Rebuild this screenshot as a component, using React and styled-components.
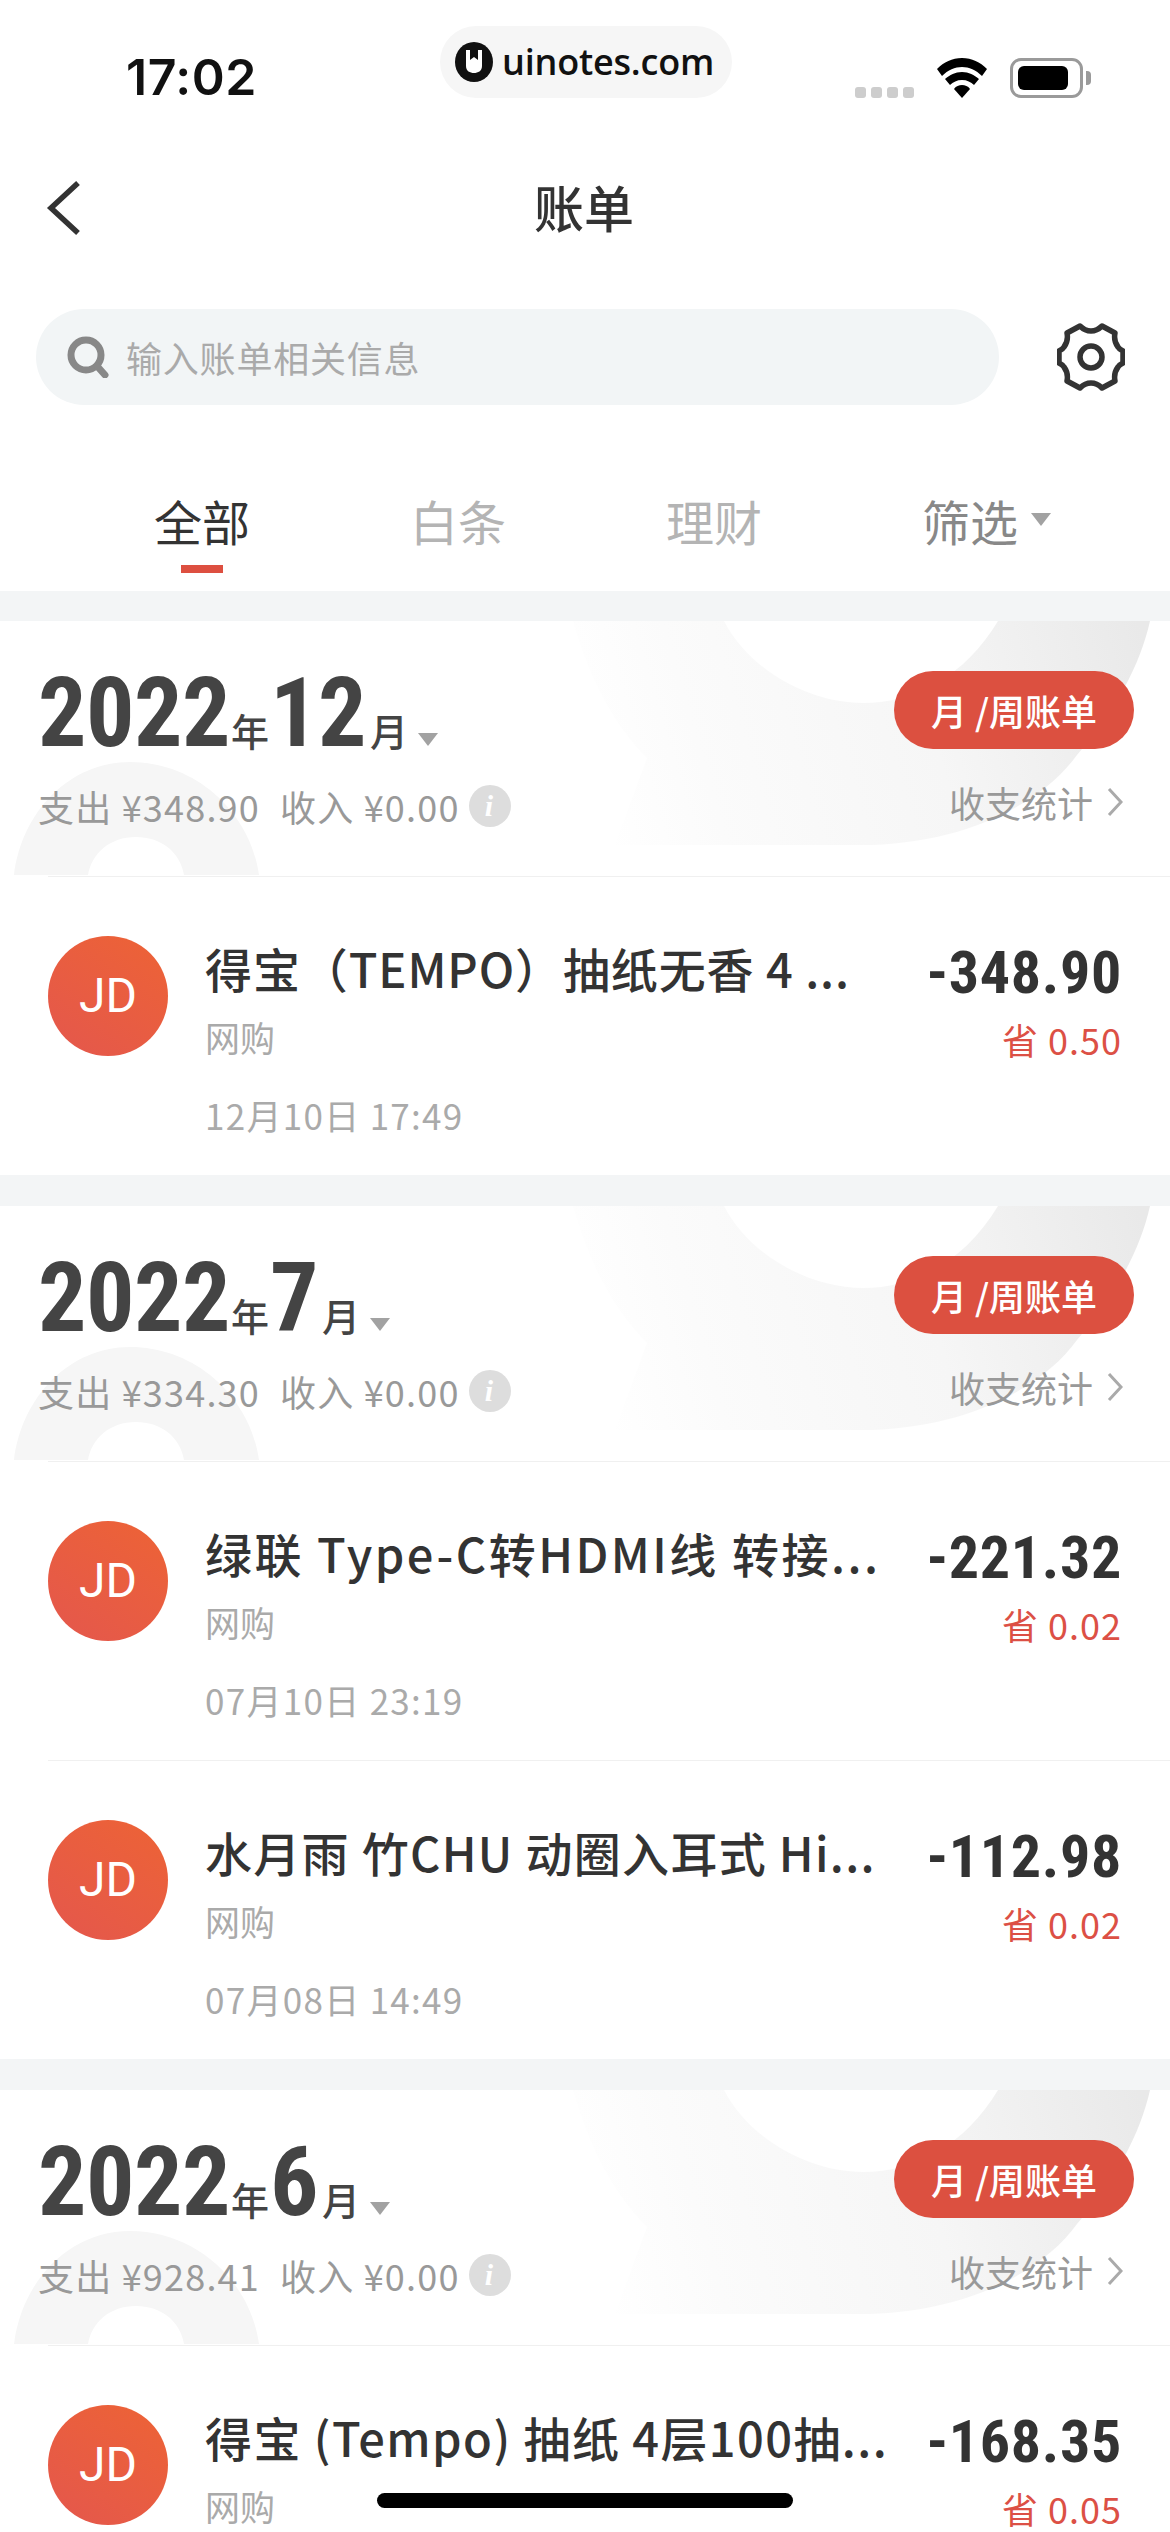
import React from "react";
import styled, { createGlobalStyle } from "styled-components";

const CJK = `"Noto Sans CJK SC", "Noto Sans", sans-serif`;
const NUM = `Roboto, "Liberation Sans", sans-serif`;

const Global = createGlobalStyle`
  html, body { margin: 0; padding: 0; background: #fff; }
  * { box-sizing: border-box; }
`;

const Phone = styled.div`
  position: relative;
  width: 1170px;
  height: 2532px;
  overflow: hidden;
  background: #fff;
  font-family: ${CJK};
`;

const StatusBar = styled.div`
  display: flex;
  align-items: flex-end;
  height: 100px;
  padding: 26px 87px 2px 126px;
`;
const Time = styled.div`
  width: 130px;
  font: 600 50px/46px Inter, ${NUM};
  letter-spacing: 0.5px;
  color: #111;
  margin-bottom: -2px;
`;
const Pill = styled.div`
  display: flex;
  align-items: center;
  gap: 9px;
  width: 292px;
  height: 72px;
  margin-left: 184px;
  padding: 0 0 0 15px;
  border-radius: 36px;
  background: #f6f6f6;
`;
const PillText = styled.span`
  font: 600 36px/1 "Open Sans", ${NUM};
  color: #111;
  letter-spacing: -.2px;
`;
const StatusIcons = styled.div`
  display: flex;
  align-items: flex-end;
  margin-left: auto;
  gap: 23px;
`;
const Dots = styled.div`
  display: flex;
  gap: 5px;
`;
const Dot = styled.i`
  display: block;
  width: 11px;
  height: 11px;
  border-radius: 3px;
  background: #cdcdcd;
`;
const Battery = styled.div`
  position: relative;
  width: 73px;
  height: 40px;
  padding: 5px;
  border: 3px solid #9a9a9a;
  border-radius: 11px;
  &::after {
    content: "";
    position: absolute;
    right: -11px;
    top: 10px;
    width: 5px;
    height: 14px;
    border-radius: 0 4px 4px 0;
    background: #9a9a9a;
  }
`;
const BatteryFill = styled.div`
  width: 50px;
  height: 100%;
  border-radius: 6px;
  background: #000;
`;

const Nav = styled.div`
  display: grid;
  grid-template-columns: 1fr auto 1fr;
  align-items: center;
  height: 116px;
  margin-top: 50px;
  padding: 0 46px;
`;
const Title = styled.div`
  font-size: 50px;
  font-weight: 500;
  line-height: 60px;
  color: #333;
  margin: -4px 0 0 -2px;
`;

const SearchRow = styled.div`
  display: flex;
  align-items: center;
  margin-top: 43px;
  padding: 0 45px 0 36px;
  justify-content: space-between;
`;
const SearchBox = styled.div`
  display: flex;
  align-items: center;
  gap: 17px;
  width: 963px;
  height: 96px;
  padding-left: 31px;
  border-radius: 48px;
  background: #f2f5f6;
`;
const Placeholder = styled.span`
  font-size: 36px;
  line-height: 50px;
  letter-spacing: .8px;
  color: #aaa;
`;

const Tabs = styled.div`
  display: grid;
  grid-template-columns: repeat(4, 256px);
  padding: 85px 0 18px 74px;
`;
const Tab = styled.div`
  position: relative;
  display: flex;
  flex-direction: column;
  align-items: center;
  font-size: 48px;
  line-height: 60px;
  color: ${(p) => p.$color};
`;
const TabLabel = styled.span`
  position: relative;
`;
const TabBar = styled.i`
  display: block;
  width: 42px;
  height: 8px;
  margin-top: 15px;
  background: ${(p) => (p.$on ? "#dd4f40" : "transparent")};
`;
const Caret = styled.i`
  display: inline-block;
  width: 0;
  height: 0;
  border-left: 10px solid transparent;
  border-right: 10px solid transparent;
  border-top: 13px solid #a2a2a2;
`;
const TabCaret = styled(Caret)`
  position: absolute;
  left: 189px;
  top: 23px;
`;

const Section = styled.section`
  border-top: ${(p) => p.$band}px solid #f3f5f6;
`;
const MonthHeader = styled.div`
  position: relative;
  display: flex;
  justify-content: space-between;
  height: 255px;
  padding: 53px 36px 0 38px;
`;
const Decor = styled.svg`
  position: absolute;
  left: 0;
  top: 0;
`;
const HeaderLeft = styled.div`
  position: relative;
`;
const HeaderRight = styled.div`
  position: relative;
  display: flex;
  flex-direction: column;
  align-items: flex-end;
  margin-top: -3px;
`;
const DateRow = styled.div`
  display: flex;
  align-items: baseline;
  height: 78px;
  color: #444;
  white-space: nowrap;
`;
const Big = styled.span`
  font: 700 96px/78px ${NUM};
  font-stretch: 75%;
  display: inline-block;
  letter-spacing: -.5px;
`;
const Unit = styled.span`
  font-size: 38px;
  font-weight: 500;
  line-height: 78px;
  margin-left: ${(p) => p.$ml || 0}px;
  margin-right: ${(p) => p.$mr || 0}px;
`;
const DateCaret = styled(Caret)`
  margin-left: 10px;
`;
const Stats = styled.div`
  display: flex;
  align-items: center;
  gap: 20px;
  margin-top: 29px;
  font-size: 36px;
  line-height: 50px;
  letter-spacing: 1.2px;
  color: #999;
  white-space: nowrap;
`;
const Info = styled.span`
  display: flex;
  align-items: center;
  justify-content: center;
  width: 42px;
  height: 42px;
  margin-left: -11px;
  border-radius: 50%;
  background: #ddd;
  color: #fff;
  font: italic 700 30px/1 "Liberation Serif", serif;
`;
const BillButton = styled.div`
  display: flex;
  align-items: center;
  justify-content: center;
  width: 240px;
  height: 78px;
  border-radius: 39px;
  background: #dc5040;
  color: #fff;
  font-size: 36px;
  font-weight: 500;
  white-space: pre;
`;
const StatLink = styled.div`
  display: flex;
  align-items: center;
  gap: 14px;
  margin: 28px 11px 0 0;
  font-size: 36px;
  line-height: 50px;
  color: #999;
`;

const Item = styled.div`
  display: flex;
  height: 299px;
  padding: 60px 48px 0 48px;
  position: relative;
  &::before {
    content: "";
    position: absolute;
    left: 48px;
    right: 0;
    top: 0;
    height: 1px;
    background: #f0f0f0;
  }
`;
const Avatar = styled.div`
  flex: none;
  display: flex;
  align-items: center;
  justify-content: center;
  width: 120px;
  height: 120px;
  border-radius: 50%;
  background: linear-gradient(215deg, #ed6335, #e4574d);
  color: #fff;
  font: 400 48px/1 Roboto, sans-serif;
`;
const Body = styled.div`
  flex: 1;
  min-width: 0;
  margin: 0 0 0 37px;
`;
const ItemTitle = styled.div`
  font-size: 47px;
  font-weight: 500;
  line-height: 64px;
  letter-spacing: ${(p) => p.$ls}px;
  color: #333;
  white-space: nowrap;
`;
const Sub = styled.div`
  margin-top: 12px;
  font-size: 35px;
  line-height: 50px;
  color: #aaa;
`;
const When = styled.div`
  margin-top: 28px;
  font-size: 35px;
  line-height: 50px;
  letter-spacing: 1.3px;
  color: #aaa;
`;
const Money = styled.div`
  flex: none;
  display: flex;
  flex-direction: column;
  align-items: flex-end;
  margin: 3px 0 0 0;
`;
const Amount = styled.div`
  font: 700 60px/68px ${NUM};
  font-stretch: 75%;
  letter-spacing: .7px;
  color: #333;
`;
const Save = styled.div`
  margin-top: 7px;
  font-size: 36px;
  line-height: 50px;
  letter-spacing: 1px;
  color: #dc5045;
`;
const HomeBar = styled.div`
  position: absolute;
  left: 377px;
  bottom: 24px;
  width: 416px;
  height: 15px;
  border-radius: 8px;
  background: #000;
`;

const DecorArt = ({ id }) => (
  <Decor width="1170" height="254" viewBox="0 0 1170 254">
    <defs>
      <linearGradient id={id} x1="600" x2="1150" y1="200" y2="40" gradientUnits="userSpaceOnUse">
        <stop offset="0" stopColor="#ffffff" />
        <stop offset="0.2" stopColor="#fbfbfb" />
        <stop offset="0.6" stopColor="#f6f6f6" />
        <stop offset="1" stopColor="#e9e9e9" />
      </linearGradient>
    </defs>
    <path
      fill={`url(#${id})`}
      d="M573 0C590 60 615 105 647 137L615 224H860C960 224 1040 185 1077 134C1115 90 1140 45 1150 0H998C965 55 915 82 863 82C810 82 750 50 724 0Z"
    />
    <path
      fill="#f6f6f6"
      d="M14 254C22 190 70 141 130 141C195 141 250 190 259 254H184C180 230 160 216 136 216C110 216 92 232 88 254Z"
    />
  </Decor>
);

const BackIcon = () => (
  <svg width="36" height="56" viewBox="0 0 36 56" fill="none" stroke="#333" strokeWidth="5.5">
    <path d="M32 3L5 28L32 53" />
  </svg>
);
const SearchIcon = () => (
  <svg width="42" height="42" viewBox="0 0 42 42" fill="none" stroke="#888" strokeWidth="7">
    <circle cx="19" cy="19" r="15" />
    <path d="M30 30L38 39" strokeLinecap="round" />
  </svg>
);
const GearIcon = () => (
  <svg width="68" height="68" viewBox="0 0 68 68" fill="none" stroke="#333" strokeWidth="5.5" strokeLinejoin="round">
    <path d="M23 3C26 6 30 8 34 8C38 8 42 6 45 3L58 10C57 15 58 20 61 24C62 26 64 27 66 28V40C64 41 62 42 61 44C58 48 57 53 58 58L45 65C42 62 38 60 34 60C30 60 26 62 23 65L10 58C11 53 10 48 7 44C6 42 4 41 2 40V28C4 27 6 26 7 24C10 20 11 15 10 10Z" />
    <circle cx="34" cy="34" r="11" />
  </svg>
);
const WifiIcon = () => (
  <svg width="50" height="40" viewBox="0 0 50 40" fill="#000">
    <path d="M25 0C15 0 7 4 0 11L5 18C11 12 18 9 25 9C32 9 39 12 45 18L50 11C43 4 35 0 25 0Z" />
    <path d="M25 14C18 14 13 17 8 21L13 27C16 24 20 22 25 22C30 22 34 24 37 27L42 21C37 17 32 14 25 14Z" />
    <path d="M25 27C22 27 19 28 17 31L25 40L33 31C31 28 28 27 25 27Z" />
  </svg>
);
const LogoIcon = () => (
  <svg width="38" height="40" viewBox="0 0 38 40">
    <ellipse cx="19" cy="20" rx="19" ry="20" fill="#111" />
    <path d="M11 8H15V18L19 15L23 18V8H27V24C27 29 23 31 19 31C15 31 11 29 11 24Z" fill="#fff" />
  </svg>
);
const ChevronSmall = () => (
  <svg width="16" height="30" viewBox="0 0 16 30" fill="none" stroke="#aaa" strokeWidth="3">
    <path d="M2 2L14 15L2 28" />
  </svg>
);

const months = [
  {
    id: "a", band: 30, year: "2022", month: "12", out: "348.90", income: "0.00",
    items: [{ t: "得宝（TEMPO）抽纸无香 4 ...", ls: 0.9, s: "12月10日 17:49", a: "-348.90", v: "0.50" }],
  },
  {
    id: "b", band: 31, year: "2022", month: "7", out: "334.30", income: "0.00",
    items: [
      { t: "绿联 Type-C转HDMI线 转接...", ls: 2.5, s: "07月10日 23:19", a: "-221.32", v: "0.02" },
      { t: "水月雨 竹CHU 动圈入耳式 Hi...", ls: 1.3, s: "07月08日 14:49", a: "-112.98", v: "0.02" },
    ],
  },
  {
    id: "c", band: 31, year: "2022", month: "6", out: "928.41", income: "0.00",
    items: [{ t: "得宝 (Tempo) 抽纸 4层100抽...", ls: 1.4, s: "", a: "-168.35", v: "0.05" }],
  },
];

const tabs = [
  { label: "全部", color: "#333", on: true },
  { label: "白条", color: "#b4b4b4" },
  { label: "理财", color: "#b4b4b4" },
  { label: "筛选", color: "#888", caret: true },
];

export default function App() {
  return (
    <Phone>
      <Global />
      <StatusBar>
        <Time>17:02</Time>
        <Pill>
          <LogoIcon />
          <PillText>uinotes.com</PillText>
        </Pill>
        <StatusIcons>
          <Dots>
            <Dot />
            <Dot />
            <Dot />
            <Dot />
          </Dots>
          <WifiIcon />
          <Battery>
            <BatteryFill />
          </Battery>
        </StatusIcons>
      </StatusBar>

      <Nav>
        <BackIcon />
        <Title>账单</Title>
      </Nav>

      <SearchRow>
        <SearchBox>
          <SearchIcon />
          <Placeholder>输入账单相关信息</Placeholder>
        </SearchBox>
        <GearIcon />
      </SearchRow>

      <Tabs>
        {tabs.map((t) => (
          <Tab key={t.label} $color={t.color}>
            <TabLabel>{t.label}</TabLabel>
            <TabBar $on={t.on} />
            {t.caret && <TabCaret />}
          </Tab>
        ))}
      </Tabs>

      {months.map((m) => (
        <Section key={m.id} $band={m.band}>
          <MonthHeader>
            <DecorArt id={`g-${m.id}`} />
            <HeaderLeft>
              <DateRow>
                <Big>{m.year}</Big>
                <Unit $ml={1} $mr={1}>年</Unit>
                <Big>{m.month}</Big>
                <Unit $ml={4}>月</Unit>
                <DateCaret />
              </DateRow>
              <Stats>
                <span>支出 ¥{m.out}</span>
                <span>收入 ¥{m.income}</span>
                <Info>i</Info>
              </Stats>
            </HeaderLeft>
            <HeaderRight>
              <BillButton>月 /周账单</BillButton>
              <StatLink>
                收支统计
                <ChevronSmall />
              </StatLink>
            </HeaderRight>
          </MonthHeader>
          {m.items.map((it, i) => (
            <Item key={i}>
              <Avatar>JD</Avatar>
              <Body>
                <ItemTitle $ls={it.ls}>{it.t}</ItemTitle>
                <Sub>网购</Sub>
                <When>{it.s}</When>
              </Body>
              <Money>
                <Amount>{it.a}</Amount>
                <Save>省 {it.v}</Save>
              </Money>
            </Item>
          ))}
        </Section>
      ))}
      <HomeBar />
    </Phone>
  );
}
